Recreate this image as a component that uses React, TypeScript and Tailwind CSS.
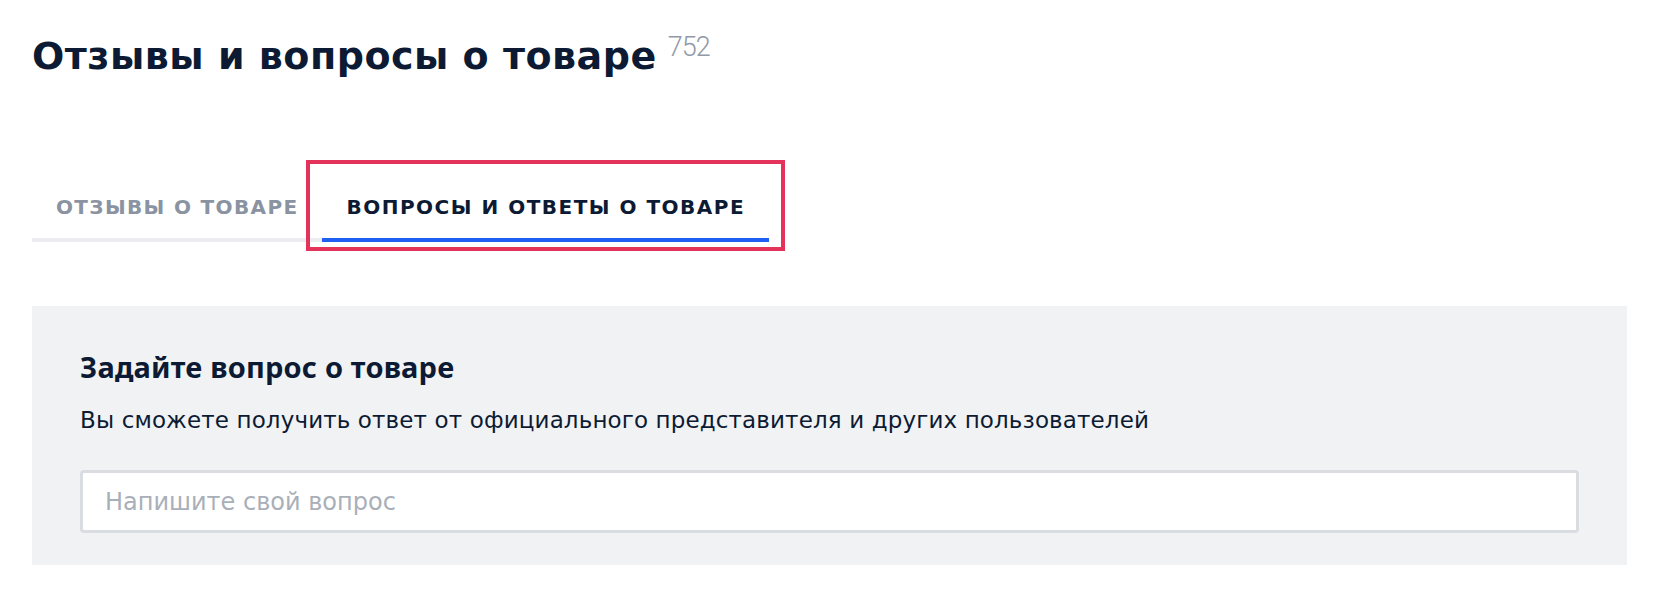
import React from "react";

export default function App() {
  return (
    <div className="relative w-[1664px] h-[598px] bg-white text-[#0c1b33] [font-family:'DejaVu_Sans',sans-serif]">
      <div className="pl-8 pt-[34px]">
        <div className="flex items-start">
          <h1 className="text-[38px] leading-[44px] font-bold tracking-[0.5px]">Отзывы и вопросы о товаре</h1>
          <span className="ml-[11px] -mt-[3px] text-[27px] leading-[32px] font-light tracking-[-1px] text-[#8f99a8] [font-family:Roboto,sans-serif]">
            752
          </span>
        </div>
        <div className="mt-[98px] flex">
          <div className="h-[66px] px-6 flex items-center border-b-4 border-[#ebedf0] text-[20px] leading-[24px] font-bold tracking-[1.35px] text-[#8a93a1]">
            ОТЗЫВЫ О ТОВАРЕ
          </div>
          <div className="relative h-[66px] px-6 flex items-center border-b-4 border-[#1f5ff3] text-[20px] leading-[24px] font-bold tracking-[1.5px]">
            ВОПРОСЫ И ОТВЕТЫ О ТОВАРЕ
            <div className="absolute -left-4 -right-4 -top-4 -bottom-[13px] border-4 border-[#e3335a]" />
          </div>
        </div>
        <div className="mt-16 w-[1595px] bg-[#f1f2f4] px-12 pt-[43px] pb-8">
          <div className="text-[29px] leading-[36px] font-bold tracking-[0.2px] [font-family:'Noto_Sans',sans-serif]">
            Задайте вопрос о товаре
          </div>
          <div className="mt-[20px] text-[23px] leading-[30px] tracking-[0.13px]">
            Вы сможете получить ответ от официального представителя и других пользователей
          </div>
          <input
            className="mt-[35px] block w-full h-[63px] rounded border-[3px] border-[#d9dce1] bg-white pl-[22px] pr-6 text-[24px] text-[#0c1b33] placeholder:text-[#a9afb8] outline-none"
            placeholder="Напишите свой вопрос"
          />
        </div>
      </div>
    </div>
  );
}
